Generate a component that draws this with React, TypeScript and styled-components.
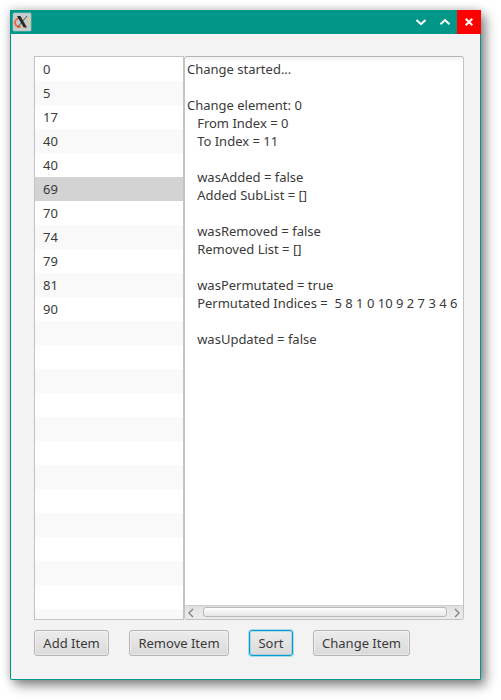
import React from "react";
import styled, { createGlobalStyle, css } from "styled-components";

const GlobalStyle = createGlobalStyle`
  body {
    margin: 0;
    background: #fff;
    overflow: hidden;
    font-family: "Noto Sans", sans-serif;
    font-size: 13px;
    color: #3a3a3a;
  }
`;

const Desktop = styled.div`
  box-sizing: border-box;
  width: 501px;
  height: 700px;
  padding: 10px;
`;

const Window = styled.div`
  box-sizing: border-box;
  display: flex;
  flex-direction: column;
  width: 471px;
  height: 670px;
  border: 1px solid #009688;
  border-top: 0;
  border-radius: 0 0 2px 2px;
  background: #f3f3f3;
  box-shadow:
    5px 6px 12px rgba(0, 0, 0, 0.42),
    0 0 10px rgba(0, 0, 0, 0.22);
`;

const TitleBar = styled.header`
  display: flex;
  align-items: center;
  height: 24px;
  flex: none;
  margin: 0 -1px;
  padding-left: 2px;
  background: #009688;
`;

const Spacer = styled.div`
  flex: 1;
`;

const WindowButton = styled.button<{ $close?: boolean }>`
  display: flex;
  align-items: center;
  justify-content: center;
  width: 24px;
  height: 24px;
  padding: 0;
  border: 0;
  background: ${(p) => (p.$close ? "#ff0000" : "transparent")};
`;

const Content = styled.main`
  display: flex;
  flex-direction: column;
  gap: 10px;
  padding: 22px 16px 0 23px;
`;

const Panes = styled.div`
  display: flex;
  height: 564px;
`;

const List = styled.ul`
  box-sizing: border-box;
  width: 150px;
  margin: 0;
  padding: 0;
  border: 1px solid #c3c3c3;
  background: #fff;
  list-style: none;
  overflow: hidden;
`;

const Cell = styled.li<{ $selected?: boolean }>`
  box-sizing: border-box;
  height: 24px;
  padding-left: 8px;
  line-height: 25px;
  background: #fff;
  &:nth-child(even) {
    background: #f9f9f9;
  }
  ${(p) =>
    p.$selected &&
    css`
      &&:nth-child(n) {
        background: #d3d3d3;
      }
    `}
`;

const LogPane = styled.section`
  box-sizing: border-box;
  display: flex;
  flex-direction: column;
  width: 280px;
  border: 1px solid #c3c3c3;
  border-top-color: #b6b6b6;
  border-radius: 3px;
  background: linear-gradient(#f0f0f0, #fff 5px);
  overflow: hidden;
`;

const Log = styled.pre`
  flex: 1;
  margin: 0;
  padding: 3px 2px;
  font: inherit;
  line-height: 18px;
  white-space: pre;
`;

const ScrollBar = styled.div`
  box-sizing: border-box;
  display: flex;
  align-items: center;
  height: 14px;
  padding: 0 2px 0 2px;
  border-top: 1px solid #cfcfcf;
  background: linear-gradient(#dedede, #e8e8e8 40%, #ebebeb);
`;

const Thumb = styled.div`
  box-sizing: border-box;
  width: 244px;
  height: 10px;
  margin: 0 6px 1px 9px;
  flex: none;
  border: 1px solid #b9b9b9;
  border-radius: 3px;
  background: linear-gradient(#fdfdfd, #e7e7e7);
`;

const Actions = styled.div`
  display: flex;
  gap: 20px;
`;

const Button = styled.button<{ $width: number; $focused?: boolean }>`
  box-sizing: border-box;
  width: ${(p) => p.$width}px;
  height: 26px;
  padding: 1px 0 0;
  border: 1px solid #b5b5b5;
  border-radius: 3px;
  background: linear-gradient(#ececec, #dadada);
  box-shadow: inset 0 0 0 1px rgba(255, 255, 255, 0.4);
  color: #3a3a3a;
  font: inherit;
  line-height: 23px;
  white-space: nowrap;
  ${(p) =>
    p.$focused &&
    css`
      border-color: #039ed3;
      box-shadow:
        0 0 0 1px rgba(3, 158, 211, 0.3),
        inset 0 0 0 1px rgba(3, 158, 211, 0.22);
    `}
`;

const values = [0, 5, 17, 40, 40, 69, 70, 74, 79, 81, 90];
const ROWS = 24;
const SELECTED = 5;

const log = `Change started...

Change element: 0
   From Index = 0
   To Index = 11

   wasAdded = false
   Added SubList = []

   wasRemoved = false
   Removed List = []

   wasPermutated = true
   Permutated Indices =  5 8 1 0 10 9 2 7 3 4 6

   wasUpdated = false
`;

const XLogo = () => (
  <svg width="20" height="20" viewBox="0 0 20 20" fill="none">
    <rect x="1" y="1" width="18" height="18" rx="1" fill="#c6cccd" stroke="#a5c6c4" strokeWidth=".7" />
    <path d="M14 6.5C18 7 18.5 11 15 13.4S8 16 5.5 14" stroke="#e8c78c" strokeWidth="1.4" />
    <path d="M7 6.2C3.5 7 2.2 10 3.5 12.5 4.3 14 6 14.8 9 15" stroke="#f0673a" strokeWidth="1.7" />
    <path d="M15 4 5.5 15.6" stroke="#555" strokeWidth="1" />
    <path d="M5 4h3.4l6.6 11.6h-3.4z" fill="#222b2c" />
  </svg>
);

const Glyph = ({ d, width = 2 }: { d: string; width?: number }) => (
  <svg width="12" height="12" viewBox="0 0 12 12" fill="none">
    <path d={d} stroke="#fff" strokeWidth={width} />
  </svg>
);

const Arrow = ({ d }: { d: string }) => (
  <svg width="7" height="10" viewBox="0 0 7 10" fill="none">
    <path d={d} stroke="#858585" strokeWidth="1.4" />
  </svg>
);

export default function App() {
  return (
    <>
      <GlobalStyle />
      <Desktop>
        <Window>
          <TitleBar>
            <XLogo />
            <Spacer />
            <WindowButton aria-label="Minimize">
              <Glyph d="M1.5 4 6 8.2 10.5 4" />
            </WindowButton>
            <WindowButton aria-label="Maximize">
              <Glyph d="M1.5 8.2 6 4 10.5 8.2" />
            </WindowButton>
            <WindowButton aria-label="Close" $close>
              <Glyph d="m2.7 2.7 6.6 6.6m0-6.6-6.6 6.6" />
            </WindowButton>
          </TitleBar>
          <Content>
            <Panes>
              <List>
                {Array.from({ length: ROWS }, (_, i) => (
                  <Cell key={i} $selected={i === SELECTED}>
                    {values[i]}
                  </Cell>
                ))}
              </List>
              <LogPane>
                <Log>{log}</Log>
                <ScrollBar>
                  <Arrow d="M6 1 2 5l4 4" />
                  <Thumb />
                  <Spacer />
                  <Arrow d="m1 1 4 4-4 4" />
                </ScrollBar>
              </LogPane>
            </Panes>
            <Actions>
              <Button $width={75}>Add Item</Button>
              <Button $width={100}>Remove Item</Button>
              <Button $width={44} $focused>
                Sort
              </Button>
              <Button $width={97}>Change Item</Button>
            </Actions>
          </Content>
        </Window>
      </Desktop>
    </>
  );
}
